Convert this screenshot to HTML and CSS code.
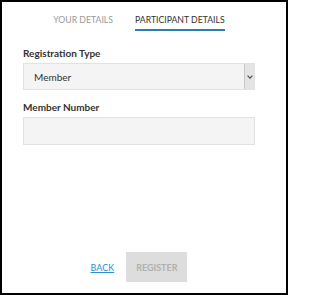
FILE: index.html
```html
<!DOCTYPE html>
<html>
<head>
<meta charset="utf-8">
<link rel="stylesheet" href="styles.css">
</head>
<body>
<div class="frame">
  <nav class="tabs">
    <span class="tab">YOUR DETAILS</span>
    <span class="tab active">PARTICIPANT DETAILS</span>
  </nav>
  <div class="field first">
    <label class="label">Registration Type</label>
    <div class="select">
      <span class="value">Member</span>
      <span class="arrow"><svg width="6" height="4" viewBox="0 0 6 4"><path d="M0.6 0.6 L3 3.2 L5.4 0.6" fill="none" stroke="#555" stroke-width="1.2"/></svg></span>
    </div>
  </div>
  <div class="field">
    <label class="label">Member Number</label>
    <div class="input"></div>
  </div>
  <div class="actions">
    <a class="back" href="#">BACK</a>
    <span class="register">REGISTER</span>
  </div>
</div>
</body>
</html>
```
FILE: styles.css
```css
html, body {
  margin: 0;
  padding: 0;
}
body {
  font-family: Lato, "Liberation Sans", sans-serif;
  background: #fff;
}
.frame {
  box-sizing: border-box;
  width: 288px;
  height: 295px;
  border: 2px solid #000;
  padding: 0 31px 11px 21px;
  display: flex;
  flex-direction: column;
}
.tabs {
  display: flex;
  justify-content: center;
  gap: 22px;
  padding-top: 12px;
}
.tab {
  font-size: 8.7px;
  line-height: 12px;
  color: #9a9a9a;
  padding-bottom: 3px;
  border-bottom: 2px solid transparent;
}
.tab.active {
  color: #333;
  border-bottom-color: #2a7fb0;
}
.field {
  display: flex;
  flex-direction: column;
}
.field.first {
  margin-top: 16px;
}
.field + .field {
  margin-top: 11px;
}
.label {
  font-size: 10px;
  line-height: 12px;
  font-weight: 700;
  color: #333;
  margin-bottom: 4px;
}
.select {
  box-sizing: border-box;
  height: 27px;
  background: #f4f4f4;
  border: 1px solid #e2e2e2;
  display: flex;
  align-items: stretch;
}
.value {
  flex: 1;
  font-size: 10px;
  color: #333;
  padding-left: 10px;
  display: flex;
  align-items: center;
}
.arrow {
  width: 9px;
  background: #e4e4e4;
  border-left: 1px solid #c8c8c8;
  display: flex;
  align-items: center;
  justify-content: center;
}
.input {
  box-sizing: border-box;
  height: 28px;
  background: #f4f4f4;
  border: 1px solid #e2e2e2;
}
.actions {
  margin-top: auto;
  display: flex;
  justify-content: center;
  align-items: center;
  gap: 12px;
}
.back {
  font-size: 9px;
  color: #2a8fd0;
  text-decoration: underline;
}
.register {
  font-size: 9px;
  font-weight: 700;
  color: #b0b0b0;
  background: #dddddd;
  height: 30px;
  display: flex;
  align-items: center;
  padding: 0 10px;
}
```
